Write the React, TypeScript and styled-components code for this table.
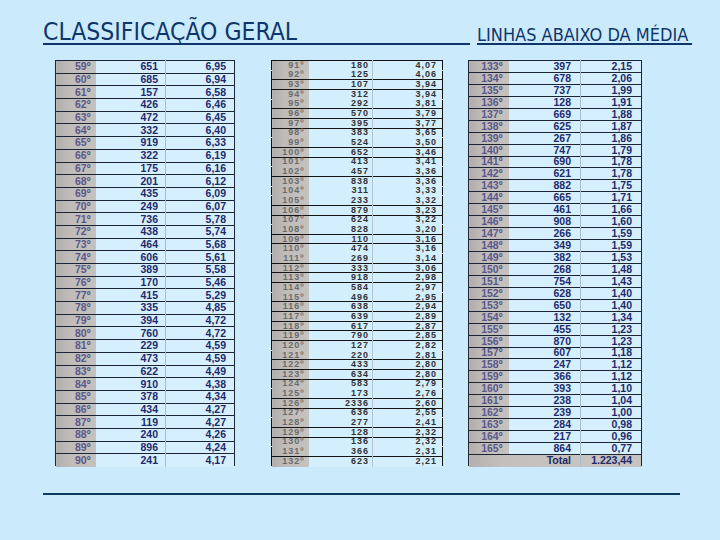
import React from "react";
import styled, { createGlobalStyle, css } from "styled-components";

const Global = createGlobalStyle`
  html, body { margin: 0; padding: 0; background: #cbebfd; }
  #root { width: 720px; height: 540px; }
`;

type Row = [string, string, string];

const left: Row[] = [
  ["59º", "651", "6,95"], ["60º", "685", "6,94"], ["61º", "157", "6,58"], ["62º", "426", "6,46"],
  ["63º", "472", "6,45"], ["64º", "332", "6,40"], ["65º", "919", "6,33"], ["66º", "322", "6,19"],
  ["67º", "175", "6,16"], ["68º", "201", "6,12"], ["69º", "435", "6,09"], ["70º", "249", "6,07"],
  ["71º", "736", "5,78"], ["72º", "438", "5,74"], ["73º", "464", "5,68"], ["74º", "606", "5,61"],
  ["75º", "389", "5,58"], ["76º", "170", "5,46"], ["77º", "415", "5,29"], ["78º", "335", "4,85"],
  ["79º", "394", "4,72"], ["80º", "760", "4,72"], ["81º", "229", "4,59"], ["82º", "473", "4,59"],
  ["83º", "622", "4,49"], ["84º", "910", "4,38"], ["85º", "378", "4,34"], ["86º", "434", "4,27"],
  ["87º", "119", "4,27"], ["88º", "240", "4,26"], ["89º", "896", "4,24"], ["90º", "241", "4,17"],
];

const middle: Row[] = [
  ["91º", "180", "4,07"], ["92º", "125", "4,06"], ["93º", "107", "3,94"], ["94º", "312", "3,94"],
  ["95º", "292", "3,81"], ["96º", "570", "3,79"], ["97º", "395", "3,77"], ["98º", "383", "3,65"],
  ["99º", "524", "3,50"], ["100º", "652", "3,46"], ["101º", "413", "3,41"], ["102º", "457", "3,36"],
  ["103º", "838", "3,36"], ["104º", "311", "3,33"], ["105º", "233", "3,32"], ["106º", "879", "3,23"],
  ["107º", "624", "3,22"], ["108º", "828", "3,20"], ["109º", "110", "3,16"], ["110º", "474", "3,16"],
  ["111º", "269", "3,14"], ["112º", "333", "3,06"], ["113º", "918", "2,98"], ["114º", "584", "2,97"],
  ["115º", "496", "2,95"], ["116º", "638", "2,94"], ["117º", "639", "2,89"], ["118º", "617", "2,87"],
  ["119º", "790", "2,85"], ["120º", "127", "2,82"], ["121º", "220", "2,81"], ["122º", "433", "2,80"],
  ["123º", "634", "2,80"], ["124º", "583", "2,79"], ["125º", "173", "2,76"], ["126º", "2336", "2,60"],
  ["127º", "636", "2,55"], ["128º", "277", "2,41"], ["129º", "128", "2,32"], ["130º", "136", "2,32"],
  ["131º", "366", "2,31"], ["132º", "623", "2,21"],
];

const middleLines = new Set([
  92, 93, 95, 96, 97, 99, 100, 102, 105, 106, 108, 109, 111, 112, 113, 115, 116, 117, 118, 119,
  121, 122, 123, 125, 126, 128, 129, 131,
]);

const right: Row[] = [
  ["133º", "397", "2,15"], ["134º", "678", "2,06"], ["135º", "737", "1,99"], ["136º", "128", "1,91"],
  ["137º", "669", "1,88"], ["138º", "625", "1,87"], ["139º", "267", "1,86"], ["140º", "747", "1,79"],
  ["141º", "690", "1,78"], ["142º", "621", "1,78"], ["143º", "882", "1,75"], ["144º", "665", "1,71"],
  ["145º", "461", "1,66"], ["146º", "908", "1,60"], ["147º", "266", "1,59"], ["148º", "349", "1,59"],
  ["149º", "382", "1,53"], ["150º", "268", "1,48"], ["151º", "754", "1,43"], ["152º", "628", "1,40"],
  ["153º", "650", "1,40"], ["154º", "132", "1,34"], ["155º", "455", "1,23"], ["156º", "870", "1,23"],
  ["157º", "607", "1,18"], ["158º", "247", "1,12"], ["159º", "366", "1,12"], ["160º", "393", "1,10"],
  ["161º", "238", "1,04"], ["162º", "239", "1,00"], ["163º", "284", "0,98"], ["164º", "217", "0,96"],
  ["165º", "864", "0,77"],
];

const NAVY = "#10356a";
const GRAY = "linear-gradient(to right, #b0adaa 0%, #bfbcb9 35%, #c4c1be 100%)";

const Page = styled.div`
  width: 720px;
  height: 540px;
  box-sizing: border-box;
  background: #cbebfd;
  padding: 0 0 0 43px;
  display: flex;
  flex-direction: column;
`;

const Header = styled.header`
  display: flex;
  align-items: flex-end;
  width: 649px;
  height: 45px;
`;

const Title = styled.h1`
  margin: 0;
  width: 427px;
  flex: none;
  font-family: "DejaVu Sans Condensed", "DejaVu Sans", sans-serif;
  font-stretch: condensed;
  font-weight: normal;
  font-size: 24.5px;
  line-height: 22px;
  color: ${NAVY};
  border-bottom: 2px solid ${NAVY};
  white-space: nowrap;
`;

const Subtitle = styled.h2`
  margin: 0 0 0 7px;
  flex: 1;
  font-family: "DejaVu Sans Condensed", "DejaVu Sans", sans-serif;
  font-stretch: condensed;
  font-weight: normal;
  font-size: 18px;
  line-height: 17px;
  color: ${NAVY};
  border-bottom: 2px solid ${NAVY};
  white-space: nowrap;
`;

const TablesRow = styled.section`
  display: flex;
  align-items: flex-start;
  height: 407px;
  margin-top: 15px;
  padding-left: 12px;
`;

type Kind = "sharp" | "blurry";

const Table = styled.table<{ $width: number; $offset: number; $kind: Kind }>`
  width: ${(p) => p.$width}px;
  margin-left: ${(p) => p.$offset}px;
  height: 407px;
  flex: none;
  table-layout: fixed;
  border-collapse: collapse;
  border-spacing: 0;
  border: 1px solid ${(p) => (p.$kind === "sharp" ? "#1c2536" : "#111")};
  background: ${(p) => (p.$kind === "sharp" ? "#d6effe" : "#d3eefd")};
  font-family: "Liberation Sans", Arial, sans-serif;
  font-weight: bold;
  ${(p) =>
    p.$kind === "sharp"
      ? css`
          font-size: 10.5px;
          color: #1d2b6b;
        `
      : css`
          font-size: 9px;
          letter-spacing: 1px;
          color: #333;
        `}
`;

const Col = styled.col<{ $w?: number }>`
  width: ${(p) => (p.$w ? `${p.$w}px` : "auto")};
`;

const Tr = styled.tr<{ $line: boolean; $kind: Kind }>`
  border-bottom: 1px solid
    ${(p) => (p.$line ? (p.$kind === "sharp" ? "#1c2536" : "#151515") : "transparent")};
`;

const Td = styled.td<{ $pad: number }>`
  padding: 0 ${(p) => p.$pad}px 0 0;
  text-align: right;
  vertical-align: middle;
  white-space: nowrap;
  line-height: 7px;
`;

const PosTd = styled(Td)<{ $kind: Kind }>`
  background: ${GRAY};
  color: ${(p) => (p.$kind === "sharp" ? "#5a588a" : "#6c6c6c")};
`;

const ValTd = styled(Td)<{ $kind: Kind }>`
  border-left: 1px solid ${(p) => (p.$kind === "sharp" ? "#a9bccb" : "#b4c4d0")};
`;

const TotalTd = styled(Td)`
  background: linear-gradient(to right, #b3b0ad 0%, #c2bfbc 30%, #c6c3c0 100%);
`;

const TotalValTd = styled(ValTd)`
  background: #c6c3c0;
`;

const Footer = styled.div`
  width: 637px;
  margin-top: 26px;
  border-top: 2px solid #0f3a60;
`;

type TableProps = {
  rows: Row[];
  width: number;
  offset: number;
  cols: [number, number];
  kind: Kind;
  pads: [number, number, number];
  lineAfter?: (n: number) => boolean;
  total?: string;
};

function DataTable({ rows, width, offset, cols, kind, pads, lineAfter, total }: TableProps) {
  return (
    <Table $width={width} $offset={offset} $kind={kind}>
      <colgroup>
        <Col $w={cols[0]} />
        <Col $w={cols[1]} />
        <Col />
      </colgroup>
      <tbody>
        {rows.map((r, i) => {
          const n = parseInt(r[0], 10);
          const isLast = i === rows.length - 1 && !total;
          const line = isLast ? false : lineAfter ? lineAfter(n) : true;
          return (
            <Tr key={r[0]} $line={line} $kind={kind}>
              <PosTd $pad={pads[0]} $kind={kind}>
                {r[0]}
              </PosTd>
              <Td $pad={pads[1]}>{r[1]}</Td>
              <ValTd $pad={pads[2]} $kind={kind}>
                {r[2]}
              </ValTd>
            </Tr>
          );
        })}
        {total && (
          <Tr $line={false} $kind={kind}>
            <TotalTd $pad={pads[1]} colSpan={2}>
              Total
            </TotalTd>
            <TotalValTd $pad={pads[2]} $kind={kind}>
              {total}
            </TotalValTd>
          </Tr>
        )}
      </tbody>
    </Table>
  );
}

export default function App() {
  return (
    <>
      <Global />
      <Page>
        <Header>
          <Title>CLASSIFICAÇÃO GERAL</Title>
          <Subtitle>LINHAS ABAIXO DA MÉDIA</Subtitle>
        </Header>
        <TablesRow>
          <DataTable rows={left} width={180} offset={0} cols={[40, 70]} kind="sharp" pads={[5, 7, 8]} />
          <DataTable
            rows={middle}
            width={172}
            offset={36}
            cols={[37, 64]}
            kind="blurry"
            pads={[4, 3, 5]}
            lineAfter={(n) => middleLines.has(n)}
          />
          <DataTable
            rows={right}
            width={174}
            offset={25}
            cols={[40, 72]}
            kind="sharp"
            pads={[6, 9, 9]}
            total="1.223,44"
          />
        </TablesRow>
        <Footer />
      </Page>
    </>
  );
}
